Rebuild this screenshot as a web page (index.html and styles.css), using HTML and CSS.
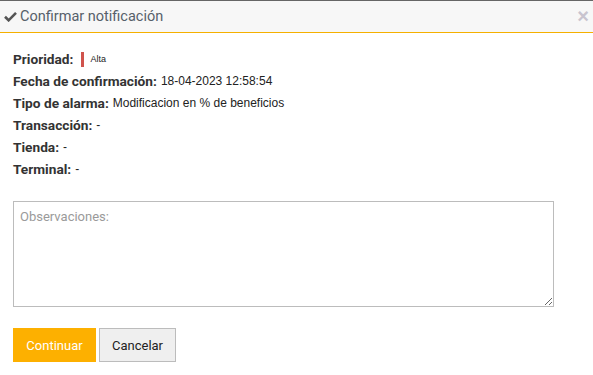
FILE: index.html
```html
<!DOCTYPE html>
<html>
<head>
<meta charset="utf-8">
<link rel="stylesheet" href="styles.css">
</head>
<body>
<div class="topline"></div>
<div class="modal">
  <div class="header">
    <div class="title">
      <svg class="check" width="13" height="11" viewBox="0 0 13 11"><path d="M1 5.8 L4.6 9.3 L12 1.8" fill="none" stroke="#555" stroke-width="2.6"/></svg>
      <span>Confirmar notificación</span>
    </div>
    <span class="close">×</span>
  </div>
  <div class="body">
    <div class="info">
      <div class="row"><b>Prioridad:</b><span class="prio"><span class="bar"></span><span class="alta">Alta</span></span></div>
      <div class="row"><b>Fecha de confirmación:</b><span class="val">18-04-2023 12:58:54</span></div>
      <div class="row"><b>Tipo de alarma:</b><span class="val">Modificacion en % de beneficios</span></div>
      <div class="row"><b>Transacción:</b><span class="val">-</span></div>
      <div class="row"><b>Tienda:</b><span class="val">-</span></div>
      <div class="row"><b>Terminal:</b><span class="val">-</span></div>
    </div>
    <textarea class="obs" placeholder="Observaciones:"></textarea>
    <div class="actions">
      <button class="btn primary">Continuar</button>
      <button class="btn secondary">Cancelar</button>
    </div>
  </div>
</div>
</body>
</html>
```
FILE: styles.css
```css
html, body { margin: 0; padding: 0; background: #fff; }
body { font-family: Roboto, "Liberation Sans", Arial, sans-serif; width: 593px; height: 375px; overflow: hidden; }
.topline { height: 1px; background: #666; }
.header {
  height: 31px;
  background: #f7f7f7;
  border-bottom: 1px solid #f5b000;
  display: flex;
  align-items: center;
  justify-content: space-between;
  padding: 0 4px 0 4px;
}
.title { display: flex; align-items: center; gap: 3px; color: #56606a; font-size: 14.5px; margin-top: -1px; }
.check { display: block; }
.close { color: #c8c4cf; font-size: 20px; font-weight: bold; line-height: 1; margin-top: -2px; margin-right: 0; font-family: "Liberation Sans", Arial, sans-serif; }
.body { padding: 15px 13px 0 13px; }
.info { display: flex; flex-direction: column; }
.row { height: 22px; display: flex; align-items: center; gap: 4px; font-size: 13.7px; color: #222; }
.row b { font-weight: bold; color: #333; }
.val { font-family: "Liberation Sans", Arial, sans-serif; font-size: 12px; color: #222; }
.prio { display: flex; align-items: center; gap: 6px; margin-left: 4px; }
.bar { width: 3px; height: 15px; background: #d0534d; display: block; }
.alta { font-family: "Liberation Sans", Arial, sans-serif; font-size: 9px; color: #222; }
.obs {
  display: block;
  box-sizing: border-box;
  width: 541px;
  height: 106px;
  margin-top: 21px;
  border: 1px solid #bcbcbc;
  padding: 7px 6px;
  font-family: Roboto, "Liberation Sans", Arial, sans-serif;
  font-size: 13px;
  resize: both;
  outline: none;
}
.obs::placeholder { color: #9a9a9a; }
.actions { display: flex; gap: 3px; margin-top: 21px; }
.btn { font-family: Roboto, "Liberation Sans", Arial, sans-serif; font-size: 13px; height: 34px; box-sizing: border-box; cursor: pointer; }
.primary { background: #fdb000; color: #fff; border: none; width: 83px; }
.secondary { background: #efefef; color: #222; border: 1px solid #bcbcbc; width: 77px; }
```
